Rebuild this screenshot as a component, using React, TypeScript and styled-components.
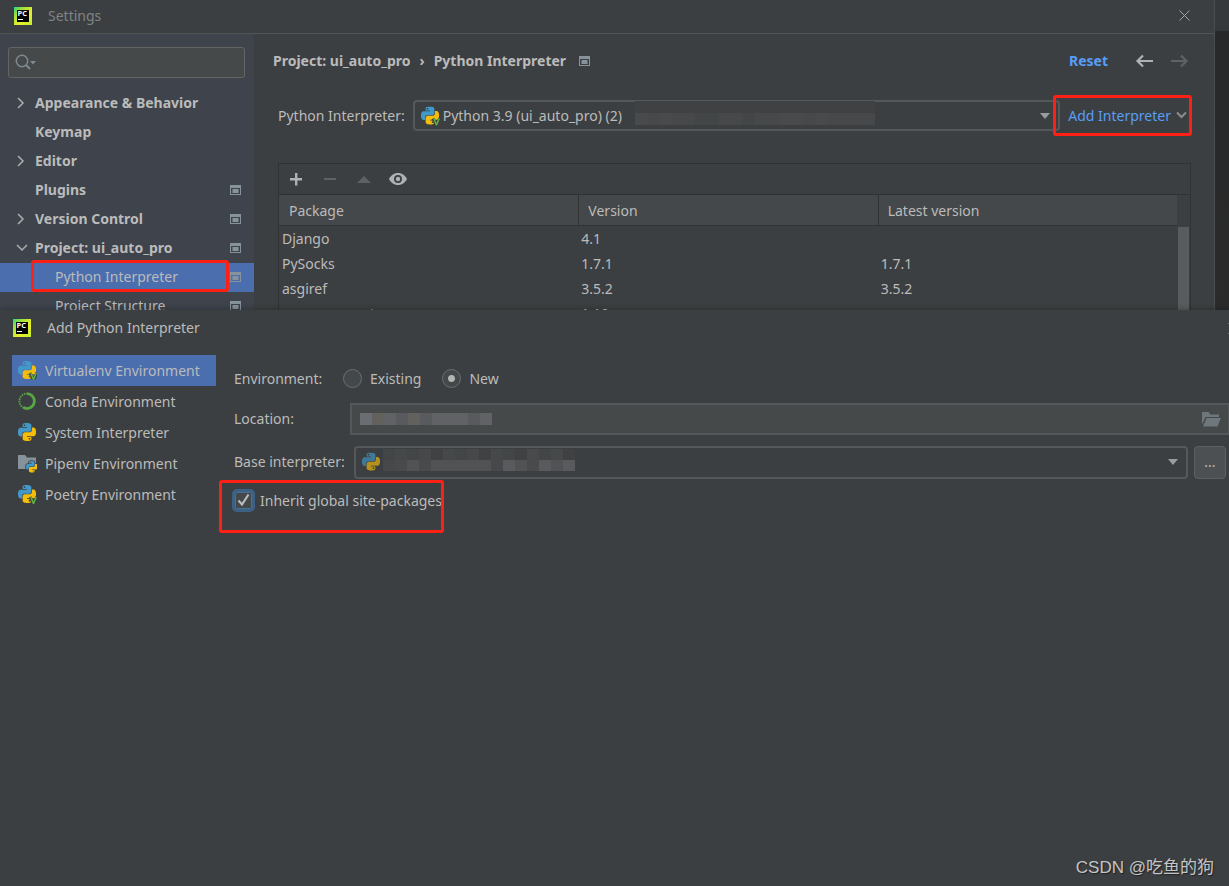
import React from "react";
import styled, { createGlobalStyle, css } from "styled-components";

const GlobalStyle = createGlobalStyle`
  *, *::before, *::after { box-sizing: border-box; }
  body {
    margin: 0;
    background: #3c3f41;
    color: #bbbbbb;
    font: 14px/20px "Noto Sans", "Noto Sans CJK SC", sans-serif;
  }
  button, input, select { font: inherit; color: inherit; margin: 0; }
  button { background: none; border: 0; padding: 0; cursor: pointer; }
  svg { display: block; flex: none; }
`;

/* ---------- page ---------- */

const Page = styled.div`
  min-height: 100vh;
  display: flex;
  flex-direction: column;
  overflow: hidden;
`;

const Desktop = styled.div`
  display: flex;
  height: 310px;
  overflow: hidden;
`;

const EditorStrip = styled.div`
  flex: none;
  width: 14px;
  background: linear-gradient(#36393b 31px, #27282a 31px, #2b2b2b 100%);
`;

const SettingsWindow = styled.section`
  flex: 1;
  min-width: 0;
  display: flex;
  flex-direction: column;
  border-right: 1px solid #4a4d4f;
`;

const TitleBar = styled.header<{ $divided?: boolean }>`
  flex: none;
  display: flex;
  align-items: center;
  height: 36px;
  padding: 0 24px 0 13px;
  gap: 16px;
  ${(p) =>
    p.$divided &&
    css`
      height: 34px;
      padding: 0 24px 2px 14px;
      border-bottom: 1px solid #515455;
    `}
`;

const WindowTitle = styled.h1<{ $dim?: boolean }>`
  flex: 1;
  margin: 0;
  font-size: 14px;
  line-height: 20px;
  font-weight: 400;
  color: ${(p) => (p.$dim ? "#808284" : "#bbbbbb")};
`;

const IconButton = styled.button`
  display: flex;
  align-items: center;
  justify-content: center;
  color: #afb1b3;
  &:disabled { color: #5f6162; }
`;

const Columns = styled.div`
  flex: 1;
  display: flex;
  min-height: 0;
`;

const Highlight = styled.span<{ $inset: string }>`
  position: absolute;
  inset: ${(p) => p.$inset};
  border: 3px solid #ff2015;
  border-radius: 3px;
  pointer-events: none;
  z-index: 2;
`;

/* ---------- settings sidebar ---------- */

const Sidebar = styled.nav`
  flex: none;
  width: 254px;
  background: #3e434c;
  padding-top: 13px;
`;

const SearchBox = styled.label`
  position: relative;
  display: block;
  margin: 0 9px 11px 8px;
  svg { position: absolute; left: 7px; top: 7px; }
`;

const SearchInput = styled.input`
  display: block;
  width: 100%;
  height: 31px;
  padding: 0 8px 0 32px;
  background: #45494a;
  border: 1px solid #646464;
  border-radius: 3px;
  outline: 0;
`;

const TreeItem = styled.button<{ $child?: boolean; $selected?: boolean }>`
  position: relative;
  display: flex;
  align-items: center;
  width: 100%;
  height: 29px;
  padding: 0 13px 2px ${(p) => (p.$child ? "55px" : "14px")};
  text-align: left;
  font-weight: ${(p) => (p.$child ? 400 : 700)};
  background: ${(p) => (p.$selected ? "#4b6eaf" : "transparent")};
`;

const TreeArrow = styled.span`
  width: 21px;
`;

const TreeLabel = styled.span`
  flex: 1;
`;

/* ---------- settings content ---------- */

const Content = styled.main`
  flex: 1;
  min-width: 0;
  display: flex;
  flex-direction: column;
  padding: 13px 23px 0 24px;
`;

const ContentHeader = styled.div`
  flex: none;
  display: flex;
  align-items: center;
  height: 28px;
  margin-left: -5px;
`;

const Breadcrumb = styled.div`
  flex: 1;
  display: flex;
  align-items: center;
  gap: 9px;
  font-weight: 700;
  svg:last-child { margin-left: 4px; }
`;

const HeaderActions = styled.div`
  display: flex;
  align-items: center;
  gap: 16px;
  padding-right: 2px;
`;

const ResetLink = styled.a`
  margin-right: 11px;
  color: #589df6;
  font-weight: 700;
  text-decoration: none;
`;

const InterpreterRow = styled.div`
  flex: none;
  display: flex;
  align-items: center;
  height: 31px;
  margin: 25px 0 32px;
  gap: 8px;
`;

const SelectWrap = styled.div`
  position: relative;
  flex: 1;
  min-width: 0;
`;

const Select = styled.select<{ $tall?: boolean }>`
  appearance: none;
  display: block;
  width: 100%;
  height: ${(p) => (p.$tall ? "33px" : "31px")};
  padding: 0 28px;
  background: #3c3f41;
  border: 2px solid #55585a;
  border-radius: 4px;
  outline: 0;
`;

const SelectIcon = styled.span<{ $faded?: boolean }>`
  position: absolute;
  left: 8px;
  top: 50%;
  transform: translateY(-50%);
  opacity: ${(p) => (p.$faded ? 0.65 : 1)};
  pointer-events: none;
`;

const SelectArrow = styled.span`
  position: absolute;
  right: 10px;
  top: 50%;
  margin-top: -3px;
  border: 5px solid transparent;
  border-top: 6px solid #9a9da0;
  border-bottom: 0;
  pointer-events: none;
`;

const AddButton = styled.button`
  position: relative;
  display: flex;
  align-items: center;
  gap: 5px;
  height: 31px;
  margin-right: 4px;
  color: #589df6;
`;

/* ---------- mosaic over private text ---------- */

const MosaicBox = styled.span<{ $left: number; $top: number }>`
  position: absolute;
  left: ${(p) => p.$left}px;
  top: ${(p) => p.$top}px;
  display: flex;
  flex-direction: column;
  pointer-events: none;
`;

const MosaicRow = styled.span`
  display: flex;
`;

const MosaicCell = styled.i<{ $color: string; $short?: boolean }>`
  width: 12px;
  height: ${(p) => (p.$short ? "11px" : "12px")};
  background: ${(p) => p.$color};
`;

type MosaicProps = { left: number; top: number; rows: string[]; short?: boolean };

/* Each letter picks a tone of the mosaic, a dot is the darkest one. */
const TONES: Record<string, string> = {
  ".": "#3f4142",
  a: "#434647",
  b: "#46484a",
  c: "#494a4c",
  d: "#505254",
  e: "#585a5d",
  f: "#606265",
  g: "#6a6d71",
  h: "#62615d",
};

function Mosaic({ left, top, rows, short }: MosaicProps) {
  return (
    <MosaicBox $left={left} $top={top} aria-hidden="true">
      {rows.map((row, r) => (
        <MosaicRow key={r}>
          {row.split("").map((tone, i) => (
            <MosaicCell key={i} $color={TONES[tone]} $short={short} />
          ))}
        </MosaicRow>
      ))}
    </MosaicBox>
  );
}

/* ---------- package table ---------- */

const PackagePanel = styled.div`
  flex: none;
  border: 1px solid #323232;
  border-bottom: 0;
`;

const Toolbar = styled.div`
  display: flex;
  align-items: center;
  gap: 16px;
  height: 30px;
  padding: 0 8px;
`;

const TableArea = styled.div`
  display: flex;
  border-top: 1px solid #323232;
`;

const PackageTable = styled.table`
  flex: 1;
  table-layout: fixed;
  border-collapse: separate;
  border-spacing: 0;
`;

const HeadCell = styled.th`
  height: 31px;
  width: 33.3%;
  padding: 1px 9px 0;
  text-align: left;
  font-weight: 400;
  background: #45484a;
  border-bottom: 1px solid #323232;
  border-left: 1px solid #323232;
  &:first-child { border-left-color: #45484a; }
`;

const Cell = styled.td`
  height: 25px;
  padding: 0 3px;
`;

const ScrollTrack = styled.div`
  flex: none;
  width: 13px;
  padding: 32px 1px 0;
`;

const ScrollThumb = styled.div`
  height: 100%;
  background: #595c5e;
`;

/* ---------- add interpreter dialog ---------- */

const Dialog = styled.section`
  position: relative;
  flex: 1;
  display: flex;
  flex-direction: column;
  background: #3c3f41;
  box-shadow: 0 -1px 6px rgba(0, 0, 0, 0.25);
`;

const DialogClose = styled(IconButton)`
  margin-right: -34px;
`;

const DialogBody = styled.div`
  flex: 1;
  display: flex;
  gap: 18px;
  padding: 9px 0 0 12px;
`;

const EnvList = styled.nav`
  flex: none;
  width: 204px;
`;

const EnvItem = styled.button<{ $selected?: boolean }>`
  display: flex;
  align-items: center;
  gap: 8px;
  width: 100%;
  height: 31px;
  padding: 0 6px;
  background: ${(p) => (p.$selected ? "#4b6eaf" : "transparent")};
`;

const Form = styled.form`
  flex: 1;
  min-width: 0;
  padding-top: 8px;
`;

const FormRow = styled.div<{ $label: number; $height: number }>`
  display: grid;
  grid-template-columns: ${(p) => p.$label}px minmax(0, 1fr);
  align-items: center;
  height: ${(p) => p.$height}px;
`;

const RadioGroup = styled.div`
  display: flex;
  gap: 21px;
`;

const RadioLabel = styled.label`
  display: flex;
  align-items: center;
  gap: 8px;
`;

const Radio = styled.input`
  appearance: none;
  width: 19px;
  height: 19px;
  border: 1px solid #6b6e70;
  border-radius: 50%;
  background: #43494a;
  &:checked { background: radial-gradient(circle, #b4b4b4 3px, #43494a 4px); }
`;

const PathField = styled.div`
  position: relative;
  button { position: absolute; right: 8px; top: 9px; }
`;

const PathInput = styled.input`
  display: block;
  width: 100%;
  height: 32px;
  padding: 0 36px 0 8px;
  background: #45494a;
  border: 2px solid #55585a;
  border-right-width: 1px;
  outline: 0;
`;

const BaseRow = styled.div`
  display: flex;
  gap: 6px;
  padding-right: 3px;
`;

const BrowseButton = styled.button`
  width: 32px;
  height: 33px;
  background: #4c5052;
  border: 1px solid #5e6060;
  border-radius: 4px;
`;

const CheckRow = styled.div`
  position: relative;
  width: 225px;
  height: 53px;
  margin: 0 0 0 -15px;
  padding: 9px 0 0 13px;
  white-space: nowrap;
`;

const CheckLabel = styled.label`
  position: relative;
  display: flex;
  align-items: center;
  gap: 5px;
  svg { position: absolute; left: 5px; top: 4px; }
`;

const Checkbox = styled.input`
  appearance: none;
  flex: none;
  width: 23px;
  height: 23px;
  border: 3px solid #3d6185;
  border-radius: 5px;
  background: #43494a;
  box-shadow: inset 0 0 0 1px #4a7096;
`;

const Watermark = styled.footer`
  position: absolute;
  right: 15px;
  bottom: 7px;
  font: 17px/22px "Liberation Sans", "Noto Sans CJK SC", sans-serif;
  color: #c4c5c6;
  text-shadow: 1px 1px 1px #222222;
`;

/* ---------- icons ---------- */

function PyCharmIcon() {
  return (
    <svg width="18" height="18" viewBox="0 0 18 18" aria-hidden="true">
      <defs>
        <linearGradient id="pc" x1="0" y1="0" x2="1" y2="1">
          <stop offset="0" stopColor="#21d789" />
          <stop offset="0.25" stopColor="#9be03a" />
          <stop offset="0.6" stopColor="#e6ee2c" />
          <stop offset="1" stopColor="#c4ee2e" />
        </linearGradient>
      </defs>
      <rect width="18" height="18" fill="url(#pc)" />
      <rect x="3" y="3" width="12" height="12" fill="#000" />
      <text x="3.5" y="9.200" fontSize="7.500" fontWeight="700" fontFamily="Open Sans" fill="#fff">PC</text>
      <rect x="4" y="12" width="5" height="1" fill="#fff" />
    </svg>
  );
}

const PY_TOP =
  "M14.25.18l.9.2.73.26.59.3.45.32.34.34.25.34.16.33.1.3.04.26.02.2-.01.13V8.5l-.05.63-.13.55-.21.46-.26.38-.3.31-.33.25-.35.19-.35.14-.33.1-.3.07-.26.04-.21.02H8.77l-.69.05-.59.14-.5.22-.41.27-.33.32-.27.35-.2.36-.15.37-.1.35-.07.32-.04.27-.02.21v3.06H3.17l-.21-.03-.28-.07-.32-.12-.35-.18-.36-.26-.36-.36-.35-.46-.32-.59-.28-.73-.21-.88-.14-1.05-.05-1.23.06-1.22.16-1.04.24-.87.32-.71.36-.57.4-.44.42-.33.42-.24.4-.16.36-.1.32-.05.24-.01h.16l.06.01h8.16v-.83H6.18l-.01-2.75-.02-.37.05-.34.11-.31.17-.28.25-.26.31-.23.38-.2.44-.18.51-.15.58-.12.64-.1.71-.06.77-.04.84-.02 1.27.05zm-6.3 1.98l-.23.33-.08.41.08.41.23.34.33.22.41.09.41-.09.33-.22.23-.34.08-.41-.08-.41-.23-.33-.33-.22-.41-.09-.41.09z";
const PY_BOTTOM =
  "M21.04 6.11l.28.06.32.12.35.18.36.27.36.35.35.47.32.59.28.73.21.88.14 1.04.05 1.23-.06 1.23-.16 1.04-.24.86-.32.71-.36.57-.4.45-.42.33-.42.24-.4.16-.36.09-.32.05-.24.02-.16-.01h-8.22v.82h5.84l.01 2.76.02.36-.05.34-.11.31-.17.29-.25.25-.31.24-.38.2-.44.17-.51.15-.58.13-.64.09-.71.07-.77.04-.84.01-1.27-.04-1.07-.14-.9-.2-.73-.25-.59-.3-.45-.33-.34-.34-.25-.34-.16-.33-.1-.3-.04-.25-.02-.2.01-.13v-5.34l.05-.64.13-.54.21-.46.26-.38.3-.32.33-.24.35-.2.35-.14.33-.1.3-.06.26-.04.21-.02.13-.01h5.84l.69-.05.59-.14.5-.21.41-.28.33-.32.27-.35.2-.36.15-.36.1-.35.07-.32.04-.28.02-.21V6.07h2.09l.14.01zm-6.47 14.25l-.23.33-.08.41.08.41.23.33.33.23.41.08.41-.08.33-.23.23-.33.08-.41-.08-.41-.23-.33-.33-.23-.41-.08-.41.08z";

function PythonIcon({ venv, folder }: { venv?: boolean; folder?: boolean }) {
  return (
    <svg width="19" height="19" viewBox="0 0 19 19" aria-hidden="true">
      {folder && <path d="M0 1h7l2 2.500h9V15H0z" fill="#87939a" />}
      <g transform={folder ? "translate(8 7) scale(.48)" : "scale(.75)"}>
        {folder && <path d={PY_TOP + PY_BOTTOM} fill="none" stroke="#3c3f41" strokeWidth="3" />}
        <path d={PY_TOP} fill="#4299c9" />
        <path d={PY_BOTTOM} fill="#f4bd0b" />
      </g>
      {venv && (
        <>
          <path d="M12 12l3.500 7L19 12" fill="none" stroke="#3c3f41" strokeWidth="3" />
          <path d="M12.800 12l2.700 6.500L18.200 12" fill="none" stroke="#62b543" strokeWidth="1.500" />
        </>
      )}
    </svg>
  );
}

function CondaIcon() {
  return (
    <svg width="19" height="19" viewBox="0 0 19 19" fill="none" stroke="#57a845" aria-hidden="true">
      <path d="M9 1.800a7.300 7.300 0 1 1-3.500 13.700" strokeWidth="2.600" />
      <circle cx="9" cy="9.100" r="7.600" strokeWidth="1.800" strokeDasharray="1.500 1" />
    </svg>
  );
}

function ProjectLevelIcon() {
  return (
    <svg width="11" height="10" viewBox="0 0 11 10" aria-hidden="true">
      <path d="M0 0h11v10H0zM1 3v6h9V3z" fill="#87939a" fillRule="evenodd" />
      <rect x="2.500" y="4" width="6" height="4" fill="#87939a" />
    </svg>
  );
}

function Chevron({ open }: { open?: boolean }) {
  return (
    <svg width="14" height="12" viewBox="0 0 14 12" fill="none" stroke="#adadad" strokeWidth="1.500" aria-hidden="true">
      <path d={open ? "M3 3l5 5 5-5" : "M4 1l5 5-5 5"} />
    </svg>
  );
}

function CloseIcon() {
  return (
    <svg width="11" height="11" viewBox="0 0 11 11" stroke="#a0a2a3" aria-hidden="true">
      <path d="M.5.5l10 10M10.500.5l-10 10" />
    </svg>
  );
}

function SearchIcon() {
  return (
    <svg width="22" height="18" viewBox="0 0 22 18" fill="none" stroke="#7c8a93" strokeWidth="1.500" aria-hidden="true">
      <circle cx="7" cy="7" r="5.700" />
      <path d="M11 11l4 4" strokeWidth="2" />
      <path d="M15 7h6l-3 3.500z" fill="#7c8a93" stroke="none" />
    </svg>
  );
}

function ArrowIcon({ forward }: { forward?: boolean }) {
  return (
    <svg width="19" height="14" viewBox="0 0 19 14" fill="none" stroke="currentColor" strokeWidth="2.200" aria-hidden="true">
      <path d={forward ? "M1 7h15M11 1.500L16.500 7 11 12.500" : "M18 7H3M8 1.500L2.500 7 8 12.500"} />
    </svg>
  );
}

function ToolIcon({ kind }: { kind: "plus" | "minus" | "up" | "eye" }) {
  return (
    <svg width="18" height="18" viewBox="0 0 18 18" fill="currentColor" aria-hidden="true">
      {kind === "plus" && <path d="M8 3h2.400v5H15v2.400h-4.600v5H8v-5H3V8h5z" />}
      {kind === "minus" && <path d="M3 8h12v2H3z" />}
      {kind === "up" && <path d="M2 13l7-7 7 7z" />}
      {kind === "eye" && (
        <path
          fillRule="evenodd"
          d="M9 3C4.800 3 1.500 5.700 0 9c1.500 3.300 4.800 6 9 6s7.500-2.700 9-6c-1.500-3.300-4.800-6-9-6zm0 2a4 4 0 1 1 0 8 4 4 0 0 1 0-8zm0 1.800a2.200 2.200 0 1 0 0 4.400 2.200 2.200 0 0 0 0-4.400z"
        />
      )}
    </svg>
  );
}

function OpenFolderIcon() {
  return (
    <svg width="19" height="15" viewBox="0 0 19 15" fill="#6d777c" aria-hidden="true">
      <path d="M0 0h6.500l2 2.500H17V5H3.500L0 12.500z" />
      <path d="M4.500 6H19l-3.500 8.500H1z" />
    </svg>
  );
}

/* ---------- content data ---------- */

type Node = { label: string; arrow?: "open" | "closed"; badge?: boolean; child?: boolean; selected?: boolean };

const TREE: Node[] = [
  { label: "Appearance & Behavior", arrow: "closed" },
  { label: "Keymap" },
  { label: "Editor", arrow: "closed" },
  { label: "Plugins", badge: true },
  { label: "Version Control", arrow: "closed", badge: true },
  { label: "Project: ui_auto_pro", arrow: "open", badge: true },
  { label: "Python Interpreter", badge: true, child: true, selected: true },
  { label: "Project Structure", badge: true, child: true },
];

const PACKAGES = [
  ["Django", "4.1", ""],
  ["PySocks", "1.7.1", "1.7.1"],
  ["asgiref", "3.5.2", "3.5.2"],
  ["async-generator", "1.10", ""],
];

const ENVIRONMENTS = [
  { label: "Virtualenv Environment", icon: <PythonIcon venv /> },
  { label: "Conda Environment", icon: <CondaIcon /> },
  { label: "System Interpreter", icon: <PythonIcon /> },
  { label: "Pipenv Environment", icon: <PythonIcon folder /> },
  { label: "Poetry Environment", icon: <PythonIcon venv /> },
];

/* ---------- app ---------- */

export default function App() {
  return (
    <Page>
      <GlobalStyle />
      <Desktop>
        <SettingsWindow>
          <TitleBar $divided>
            <PyCharmIcon />
            <WindowTitle $dim>Settings</WindowTitle>
            <IconButton aria-label="Close settings">
              <CloseIcon />
            </IconButton>
          </TitleBar>
          <Columns>
            <Sidebar>
              <SearchBox>
                <SearchIcon />
                <SearchInput type="text" aria-label="Search settings" />
              </SearchBox>
              {TREE.map((node) => (
                <TreeItem key={node.label} $child={node.child} $selected={node.selected}>
                  {!node.child && <TreeArrow>{node.arrow && <Chevron open={node.arrow === "open"} />}</TreeArrow>}
                  <TreeLabel>{node.label}</TreeLabel>
                  {node.badge && <ProjectLevelIcon />}
                  {node.selected && <Highlight $inset="-3px 25px 0 31px" />}
                </TreeItem>
              ))}
            </Sidebar>
            <Content>
              <ContentHeader>
                <Breadcrumb>
                  <span>Project: ui_auto_pro</span>
                  <span>›</span>
                  <span>Python Interpreter</span>
                  <ProjectLevelIcon />
                </Breadcrumb>
                <HeaderActions>
                  <ResetLink href="#reset">Reset</ResetLink>
                  <IconButton aria-label="Back">
                    <ArrowIcon />
                  </IconButton>
                  <IconButton aria-label="Forward" disabled>
                    <ArrowIcon forward />
                  </IconButton>
                </HeaderActions>
              </ContentHeader>
              <InterpreterRow>
                <label htmlFor="interpreter">Python Interpreter:</label>
                <SelectWrap>
                  <Select id="interpreter">
                    <option>Python 3.9 (ui_auto_pro) (2)</option>
                  </Select>
                  <SelectIcon>
                    <PythonIcon venv />
                  </SelectIcon>
                  <Mosaic left={222} top={1} rows={["....................", "cbcbbaabbabbccbcbbbb"]} />
                  <SelectArrow />
                </SelectWrap>
                <AddButton>
                  Add Interpreter
                  <svg width="11" height="10" viewBox="0 0 11 10" fill="none" stroke="#8a8d8f" strokeWidth="2" aria-hidden="true">
                    <path d="M1 1.500l4.500 4.500L10 1.500" />
                  </svg>
                  <Highlight $inset="-5px -5px -5px -15px" />
                </AddButton>
              </InterpreterRow>
              <PackagePanel>
                <Toolbar>
                  <IconButton aria-label="Install package">
                    <ToolIcon kind="plus" />
                  </IconButton>
                  <IconButton aria-label="Uninstall package" disabled>
                    <ToolIcon kind="minus" />
                  </IconButton>
                  <IconButton aria-label="Upgrade package" disabled>
                    <ToolIcon kind="up" />
                  </IconButton>
                  <IconButton aria-label="Show early releases">
                    <ToolIcon kind="eye" />
                  </IconButton>
                </Toolbar>
                <TableArea>
                  <PackageTable>
                    <thead>
                      <tr>
                        <HeadCell>Package</HeadCell>
                        <HeadCell>Version</HeadCell>
                        <HeadCell>Latest version</HeadCell>
                      </tr>
                    </thead>
                    <tbody>
                      {PACKAGES.map(([name, version, latest]) => (
                        <tr key={name}>
                          <Cell>{name}</Cell>
                          <Cell>{version}</Cell>
                          <Cell>{latest}</Cell>
                        </tr>
                      ))}
                    </tbody>
                  </PackageTable>
                  <ScrollTrack>
                    <ScrollThumb />
                  </ScrollTrack>
                </TableArea>
              </PackagePanel>
            </Content>
          </Columns>
        </SettingsWindow>
        <EditorStrip />
      </Desktop>

      <Dialog>
        <TitleBar>
          <PyCharmIcon />
          <WindowTitle as="h2">Add Python Interpreter</WindowTitle>
          <DialogClose aria-label="Close dialog">
            <CloseIcon />
          </DialogClose>
        </TitleBar>
        <DialogBody>
          <EnvList>
            {ENVIRONMENTS.map((env, i) => (
              <EnvItem key={env.label} $selected={i === 0}>
                {env.icon}
                {env.label}
              </EnvItem>
            ))}
          </EnvList>
          <Form onSubmit={(e) => e.preventDefault()}>
            <FormRow $label={109} $height={31}>
              <span id="env-label">Environment:</span>
              <RadioGroup role="radiogroup" aria-labelledby="env-label">
                <RadioLabel>
                  <Radio type="radio" name="env" />
                  Existing
                </RadioLabel>
                <RadioLabel>
                  <Radio type="radio" name="env" defaultChecked />
                  New
                </RadioLabel>
              </RadioGroup>
            </FormRow>
            <FormRow $label={116} $height={50}>
              <label htmlFor="location">Location:</label>
              <PathField>
                <PathInput id="location" type="text" />
                <Mosaic left={10} top={10} rows={["ghfehefffef"]} />
                <button type="button" aria-label="Browse location">
                  <OpenFolderIcon />
                </button>
              </PathField>
            </FormRow>
            <FormRow $label={120} $height={36}>
              <label htmlFor="base">Base interpreter:</label>
              <BaseRow>
                <SelectWrap>
                  <Select id="base" $tall />
                  <SelectIcon $faded>
                    <PythonIcon />
                  </SelectIcon>
                  <Mosaic left={29} top={3} short rows={["abab.bab.ba.cab.", "bcdcdddddbedcede"]} />
                  <SelectArrow />
                </SelectWrap>
                <BrowseButton type="button" aria-label="Browse interpreters">
                  ...
                </BrowseButton>
              </BaseRow>
            </FormRow>
            <CheckRow>
              <CheckLabel>
                <Checkbox type="checkbox" defaultChecked />
                <svg width="13" height="14" viewBox="0 0 13 14" fill="none" stroke="#bbbbbb" strokeWidth="2.200" aria-hidden="true">
                  <path d="M1.500 7.500l3.500 4 6.500-10" />
                </svg>
                Inherit global site-packages
              </CheckLabel>
              <Highlight $inset="0" />
            </CheckRow>
          </Form>
        </DialogBody>
        <Watermark>CSDN @吃鱼的狗</Watermark>
      </Dialog>
    </Page>
  );
}
